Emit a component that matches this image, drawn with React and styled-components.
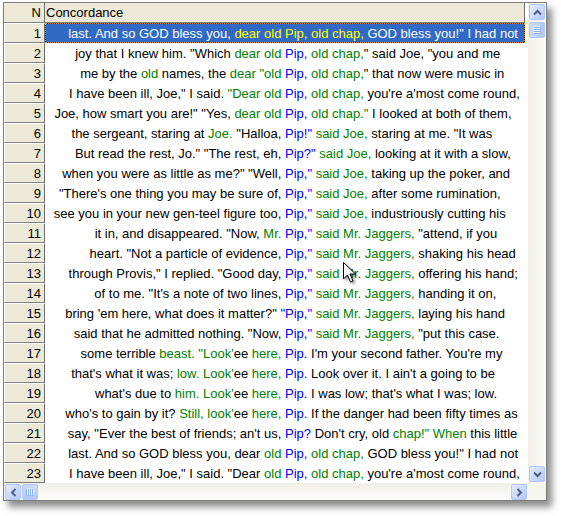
import React from 'react';
import styled, { createGlobalStyle, css } from 'styled-components';

const GlobalStyle = createGlobalStyle`
  body {
    margin: 0;
    background: #fff;
    font-family: "Liberation Sans", Arial, sans-serif;
  }
`;

// {..} = green, [..] = blue. The keyword always starts the right half.
const rows = [
  [`last. And so GOD bless you, {dear old} `, `{Pip, old chap,} GOD bless you!" I had not`],
  [`joy that I knew him. "Which {dear old} `, `[Pip,] {old chap,}" said Joe, "you and me`],
  [`me by the {old} names, the {dear "old} `, `[Pip,] {old chap,}" that now were music in`],
  [`I have been ill, Joe," I said. {"Dear old} `, `[Pip,] {old chap,} you're a'most come round,`],
  [`Joe, how smart you are!" "Yes, {dear old} `, `[Pip,] {old chap."} I looked at both of them,`],
  [`the sergeant, staring at {Joe.} "Halloa, `, `[Pip!"] {said Joe,} staring at me. "It was`],
  [`But read the rest, Jo." "The rest, eh, `, `[Pip?"] {said Joe,} looking at it with a slow,`],
  [`when you were as little as me?" "Well, `, `[Pip,"] {said Joe,} taking up the poker, and`],
  [`"There's one thing you may be sure of, `, `[Pip,"] {said Joe,} after some rumination,`],
  [`see you in your new gen-teel figure too, `, `[Pip,"] {said Joe,} industriously cutting his`],
  [`it in, and disappeared. "Now, {Mr.} `, `[Pip,"] {said Mr. Jaggers,} "attend, if you`],
  [`heart. "Not a particle of evidence, `, `[Pip,"] {said Mr. Jaggers,} shaking his head`],
  [`through Provis," I replied. "Good day, `, `[Pip,"] {said Mr. Jaggers,} offering his hand;`],
  [`of to me. "It's a note of two lines, `, `[Pip,"] {said Mr. Jaggers,} handing it on,`],
  [`bring 'em here, what does it matter?" ["]`, `[Pip,"] {said Mr. Jaggers,} laying his hand`],
  [`said that he admitted nothing. "Now, `, `[Pip,"] {said Mr. Jaggers,} "put this case.`],
  [`some terrible {beast. "Look'}ee {here,} `, `[Pip.] I'm your second father. You're my`],
  [`that's what it was; {low. Look'}ee {here,} `, `[Pip.] Look over it. I ain't a going to be`],
  [`what's due to {him. Look'}ee {here,} `, `[Pip.] I was low; that's what I was; low.`],
  [`who's to gain by it? {Still, look'}ee {here,} `, `[Pip.] If the danger had been fifty times as`],
  [`say, "Ever the best of friends; an't us, `, `[Pip?] Don't cry, old {chap!" When} this little`],
  [`last. And so GOD bless you, dear {old} `, `[Pip,] {old chap,} GOD bless you!" I had not`],
  [`I have been ill, Joe," I said. "Dear {old} `, `[Pip,] {old chap,} you're a'most come round,`],
];

function Marked({ text, selected }) {
  const parts = text.split(/(\{[^}]*\}|\[[^\]]*\])/).filter(Boolean);
  return parts.map((p, i) => {
    if (p[0] === '{') return <Word key={i} $tone="green" $selected={selected}>{p.slice(1, -1)}</Word>;
    if (p[0] === '[') return <Word key={i} $tone="blue" $selected={selected}>{p.slice(1, -1)}</Word>;
    return <span key={i}>{p}</span>;
  });
}

function Chevron({ dir }) {
  const rot = { up: 0, right: 90, down: 180, left: 270 }[dir];
  return (
    <svg width="9" height="9" viewBox="0 0 9 9" style={{ transform: `rotate(${rot}deg)` }}>
      <path d="M1 6.5 L4.5 3 L8 6.5" stroke="#4d6185" strokeWidth="2" fill="none" />
    </svg>
  );
}

function Grip({ vertical }) {
  return (
    <svg width="8" height="8" viewBox="0 0 8 8" style={{ transform: vertical ? 'none' : 'rotate(90deg)' }}>
      {[0, 2, 4, 6].map((y) => (
        <g key={y}>
          <rect x="0" y={y} width="7" height="1" fill="#eef4fe" />
          <rect x="1" y={y + 1} width="7" height="1" fill="#8cb0f8" />
        </g>
      ))}
    </svg>
  );
}

export default function App() {
  return (
    <Page>
      <GlobalStyle />
      <Window>
        <Sheet>
          <Line>
            <HeadCell $num>N</HeadCell>
            <HeadCell>Concordance</HeadCell>
          </Line>
          {rows.map(([left, right], i) => (
            <Line key={i}>
              <NumCell>{i + 1}</NumCell>
              <TextCell $selected={i === 0}>
                <Left><Marked text={left} selected={i === 0} /></Left>
                <Right><Marked text={right} selected={i === 0} /></Right>
              </TextCell>
            </Line>
          ))}
        </Sheet>
        <VScroll>
          <ScrollButton><Chevron dir="up" /></ScrollButton>
          <Thumb $vertical><Grip vertical /></Thumb>
          <Track />
          <ScrollButton><Chevron dir="down" /></ScrollButton>
        </VScroll>
        <HScroll>
          <ScrollButton><Chevron dir="left" /></ScrollButton>
          <Thumb><Grip /></Thumb>
          <Track />
          <ScrollButton><Chevron dir="right" /></ScrollButton>
        </HScroll>
        <Corner />
      </Window>
      <Cursor width="14" height="22" viewBox="0 0 14 22">
        <path d="M0.5 0.5 V17 L4.5 13 L7.5 20 L10 19 L7 12 H12.5 Z" fill="#fff" stroke="#000" strokeWidth="1" />
      </Cursor>
    </Page>
  );
}

const Page = styled.div`
  position: relative;
  padding: 2px 0 0 3px;
  height: 516px;
  box-sizing: border-box;
`;

const Window = styled.div`
  display: grid;
  grid-template-columns: 524px 18px;
  grid-template-rows: 480px 17px;
  width: max-content;
  border: 1px solid #7f7f7f;
  background: #fff;
  box-shadow: 5px 6px 7px rgba(0, 0, 0, 0.45);
`;

const Sheet = styled.div`
  display: flex;
  flex-direction: column;
  overflow: hidden;
  font-size: 13px;
`;

const Line = styled.div`
  display: grid;
  grid-template-columns: 41px 480px;
  height: 20px;
`;

const HeadCell = styled.div`
  box-sizing: border-box;
  background: #ece9d8;
  border-right: 1px solid #6f6f6f;
  border-bottom: 1px solid #7f7f7f;
  line-height: 18px;
  padding: ${(p) => (p.$num ? '1px 3px 0 0' : '1px 0 0 1px')};
  text-align: ${(p) => (p.$num ? 'right' : 'left')};
`;

const NumCell = styled.div`
  box-sizing: border-box;
  background: #ece9d8;
  border-top: 1px solid #fff;
  border-left: 1px solid #fff;
  border-right: 1px solid #6f6f6f;
  border-bottom: 1px solid #7f7f7f;
  line-height: 17px;
  padding: 1px 3px 0 0;
  text-align: right;
`;

const TextCell = styled.div`
  display: flex;
  overflow: hidden;
  box-sizing: border-box;
  line-height: 19px;
  padding-top: 1px;
  white-space: pre;
  color: #000;
  ${(p) =>
    p.$selected &&
    css`
      background: #316ac5;
      color: #fff;
      box-shadow: inset 0 0 0 1px #000;
      outline: 1px dotted #f0a020;
      outline-offset: -1px;
    `}
`;

const Left = styled.span`
  flex: 0 0 240px;
  display: flex;
  justify-content: flex-end;
  overflow: hidden;
`;

const Right = styled.span`
  flex: none;
`;

const Word = styled.span`
  color: ${(p) => (p.$selected ? '#ffff00' : p.$tone === 'green' ? '#008000' : '#0000ff')};
`;

const VScroll = styled.div`
  display: flex;
  flex-direction: column;
  gap: 2px;
  padding: 1px;
  background: linear-gradient(to right, #f1efe6, #fdfdfb);
`;

const HScroll = styled.div`
  display: flex;
  gap: 1px;
  padding: 1px 1px 0 1px;
  background: linear-gradient(to bottom, #f1efe6, #fdfdfb);
`;

const Corner = styled.div`
  background: #f6f5f0;
`;

const Track = styled.div`
  flex: 1;
`;

const ScrollButton = styled.div`
  box-sizing: border-box;
  width: 16px;
  height: 16px;
  flex: none;
  display: flex;
  align-items: center;
  justify-content: center;
  border: 1px solid #b4c8f6;
  border-radius: 2px;
  background: linear-gradient(135deg, #e4ecfd 0%, #c6d6fc 60%, #b4c9f6 100%);
`;

const Thumb = styled(ScrollButton)`
  background: ${(p) =>
    p.$vertical
      ? 'linear-gradient(to right, #cddbfc, #bccff9 60%, #b1c6f5)'
      : 'linear-gradient(to bottom, #cddbfc, #bccff9 60%, #b1c6f5)'};
`;

const Cursor = styled.svg`
  position: absolute;
  left: 343px;
  top: 262px;
  filter: drop-shadow(2px 2px 1.5px rgba(0, 0, 0, 0.4));
`;
